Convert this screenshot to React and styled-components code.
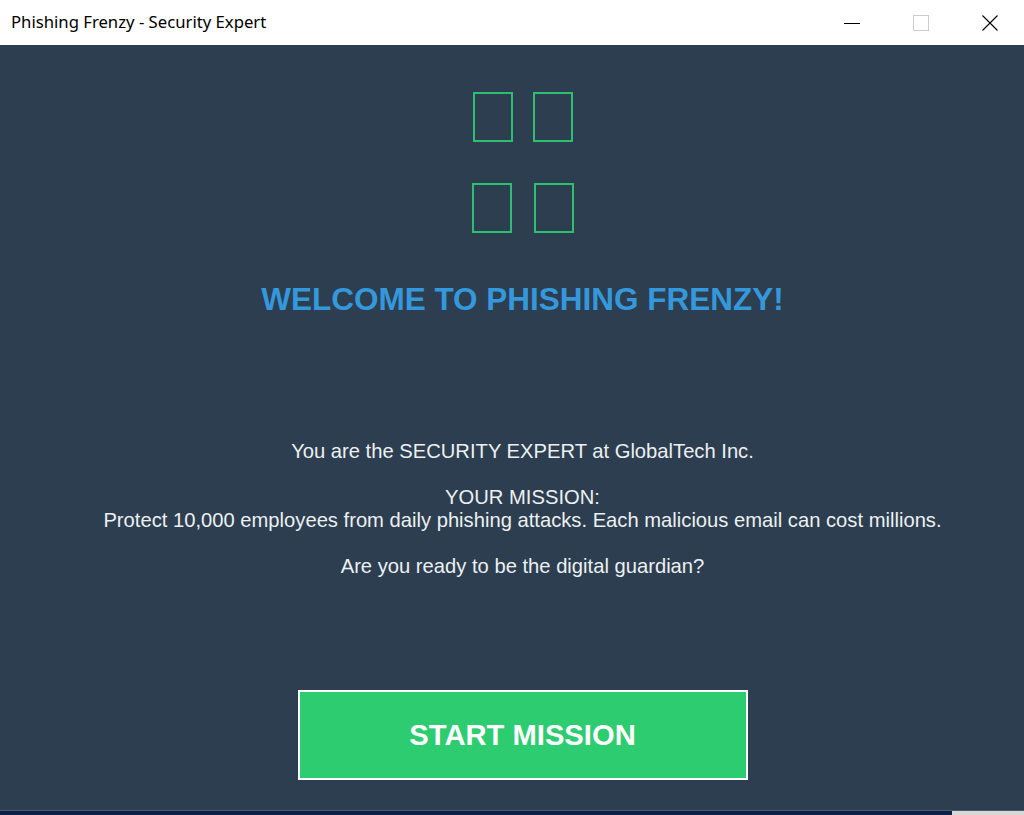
import React from 'react'
import styled, { createGlobalStyle } from 'styled-components'

const Global = createGlobalStyle`
  html, body { margin: 0; padding: 0; }
  body { width: 1024px; height: 815px; overflow: hidden; background: #2c3e50; }
`;

const Window = styled.div`
  display: flex;
  flex-direction: column;
  width: 1024px;
  height: 815px;
`;

const TitleBar = styled.div`
  height: 45px;
  background: #ffffff;
  display: flex;
  align-items: center;
  justify-content: space-between;
`;

const Title = styled.div`
  font-family: "Noto Sans", "Open Sans", sans-serif;
  font-size: 16.7px;
  color: #000;
  padding-left: 11px;
  padding-bottom: 2px;
`;

const Controls = styled.div`
  display: flex;
  height: 100%;
`;

const Ctrl = styled.div`
  width: 69px;
  height: 100%;
  display: flex;
  align-items: center;
  justify-content: center;
  padding-bottom: 2px;
`;

const Main = styled.div`
  flex: 1;
  background: #2c3e50;
  display: flex;
  flex-direction: column;
  align-items: center;
  padding-left: 21px;
  font-family: "Liberation Sans", Arial, sans-serif;
`;

const IconGrid = styled.div`
  display: flex;
  flex-direction: column;
  align-items: center;
  gap: 41px;
  margin-top: 47px;
`;

const IconRow = styled.div`
  display: flex;
  gap: ${p => p.$gap}px;
  margin-left: ${p => p.$shift || 0}px;
`;

const Tofu = styled.span`
  width: 36px;
  height: 46px;
  border: 2px solid #2ecc71;
  box-sizing: content-box;
  opacity: 0.9;
`;

const Heading = styled.h1`
  margin: 48px 0 0;
  font-size: 31.5px;
  font-weight: bold;
  color: #3498db;
  line-height: 36px;
`;

const Story = styled.div`
  margin-top: 123px;
  text-align: center;
  color: #ecf0f1;
  font-size: 20.2px;
  line-height: 23px;
`;

const Line = styled.p`
  margin: 0;
`;

const Gap = styled.div`
  height: 23px;
`;

const StartButton = styled.button`
  margin-top: 112px;
  width: 450px;
  height: 90px;
  background: #2ecc71;
  border: 2px solid #ffffff;
  color: #ffffff;
  font-family: "Liberation Sans", Arial, sans-serif;
  font-weight: bold;
  font-size: 29.2px;
  cursor: pointer;
`;

const Taskbar = styled.div`
  height: 4px;
  display: flex;
  background: #0c1f45;
  border-top: 1px solid #4a5a70;
`;

const TaskbarTray = styled.div`
  margin-left: auto;
  width: 72px;
  background: #d8d8d8;
`;

export default function App() {
  return (
    <>
      <Global />
      <Window>
        <TitleBar>
          <Title>Phishing Frenzy - Security Expert</Title>
          <Controls>
            <Ctrl>
              <svg width="16" height="16" viewBox="0 0 16 16"><path d="M0 8.5h16" stroke="#000" strokeWidth="1" /></svg>
            </Ctrl>
            <Ctrl>
              <svg width="16" height="16" viewBox="0 0 16 16"><rect x="0.5" y="0.5" width="15" height="15" fill="none" stroke="#cccccc" strokeWidth="1" /></svg>
            </Ctrl>
            <Ctrl>
              <svg width="16" height="16" viewBox="0 0 16 16"><path d="M0.5 0.5L15.5 15.5M15.5 0.5L0.5 15.5" stroke="#000" strokeWidth="1.1" /></svg>
            </Ctrl>
          </Controls>
        </TitleBar>
        <Main>
          <IconGrid>
            <IconRow $gap={20} $shift={0}><Tofu /><Tofu /></IconRow>
            <IconRow $gap={22}><Tofu /><Tofu /></IconRow>
          </IconGrid>
          <Heading>WELCOME TO PHISHING FRENZY!</Heading>
          <Story>
            <Line>You are the SECURITY EXPERT at GlobalTech Inc.</Line>
            <Gap />
            <Line>YOUR MISSION:</Line>
            <Line>Protect 10,000 employees from daily phishing attacks. Each malicious email can cost millions.</Line>
            <Gap />
            <Line>Are you ready to be the digital guardian?</Line>
          </Story>
          <StartButton>START MISSION</StartButton>
        </Main>
        <Taskbar><TaskbarTray /></Taskbar>
      </Window>
    </>
  )
}
